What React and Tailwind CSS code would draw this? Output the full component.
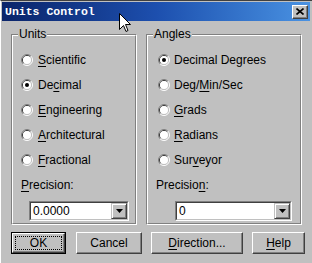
import React from 'react';

const Radio = ({ checked }) => (
    <svg width="12" height="12" viewBox="0 0 12 12" className="shrink-0">
        <path d="M2.11 9.89 A5.5 5.5 0 0 1 9.89 2.11" fill="none" stroke="#808080" strokeWidth="1" />
        <path d="M9.89 2.11 A5.5 5.5 0 0 1 2.11 9.89" fill="none" stroke="#ffffff" strokeWidth="1" />
        <path d="M2.82 9.18 A4.5 4.5 0 0 1 9.18 2.82" fill="none" stroke="#404040" strokeWidth="1" />
        <path d="M9.18 2.82 A4.5 4.5 0 0 1 2.82 9.18" fill="none" stroke="#c0c0c0" strokeWidth="1" />
        <circle cx="6" cy="6" r="4" fill="#ffffff" />
        {checked && <circle cx="6" cy="6" r="2" fill="#000000" />}
    </svg>
);

const Label = ({ text, u }) => {
    if (u == null) return <span>{text}</span>;
    return (
        <span>
            {text.slice(0, u)}
            <span className="underline underline-offset-2">{text[u]}</span>
            {text.slice(u + 1)}
        </span>
    );
};

const Option = ({ text, u, checked, gap }) => (
    <div className={`flex items-center h-[25px] ${gap}`}>
        <Radio checked={checked} />
        <Label text={text} u={u} />
    </div>
);

const Group = ({ title, width, children }) => (
    <div className={`relative h-[191px] ${width} border border-t-[#808080] border-l-[#808080] border-r-white border-b-white`}>
        <div className="h-full border border-t-white border-l-white border-r-[#808080] border-b-[#808080]">
            {children}
        </div>
        <span className="absolute -top-[9px] left-[6px] px-[1px] bg-[#c0c0c0] leading-[16px]">{title}</span>
    </div>
);

const Select = ({ value, width, ml }) => (
    <div className={`h-[20px] ${width} ${ml} border border-t-[#808080] border-l-[#808080] border-r-white border-b-white`}>
        <div className="h-full flex border border-t-[#404040] border-l-[#404040] border-r-[#c0c0c0] border-b-[#c0c0c0] bg-white">
            <span className="flex-1 pl-[2px] leading-[16px]">{value}</span>
            <div className="w-[16px] h-[16px] flex items-center justify-center bg-[#c0c0c0] border border-t-[#c0c0c0] border-l-[#c0c0c0] border-r-[#404040] border-b-[#404040] shadow-[inset_1px_1px_0_#fff,inset_-1px_-1px_0_#808080]">
                <svg width="7" height="4" viewBox="0 0 7 4">
                    <path d="M0 0 H7 L3.5 4 Z" fill="#000" />
                </svg>
            </div>
        </div>
    </div>
);

const Button = ({ children, width, ml }) => (
    <div className={`h-[22px] ${width} ${ml} flex items-center justify-center border border-t-white border-l-white border-r-[#404040] border-b-[#404040] shadow-[inset_-1px_-1px_0_#808080]`}>
        {children}
    </div>
);

export default function App() {
    return (
        <div className="relative w-[312px] h-[263px] bg-[#c0c0c0] overflow-hidden text-[12px] text-black border-t border-t-[#404040] border-l border-l-white" style={{ fontFamily: '"Liberation Sans", Arial, sans-serif' }}>
            <div className="mt-[1px] ml-[1px] mr-[2px] h-[19px] flex items-center bg-gradient-to-r from-[#0a246a] via-[#1d4fae] to-[#4a92e2] pl-[3px] pr-[2px]">
                <span className="flex-1 text-white font-bold text-[11.5px] leading-none" style={{ fontFamily: '"Liberation Mono", "Courier New", monospace' }}>
                    Units Control
                </span>
                <div className="w-[16px] h-[14px] flex items-center justify-center bg-[#c0c0c0] border border-t-white border-l-white border-r-[#404040] border-b-[#404040] shadow-[inset_-1px_-1px_0_#808080]">
                    <svg width="8" height="7" viewBox="0 0 8 7">
                        <path d="M0.5 0.5 L7.5 6.5 M7.5 0.5 L0.5 6.5" stroke="#000" strokeWidth="1.6" />
                    </svg>
                </div>
            </div>

            <div className="flex mt-[13px] ml-[10px] gap-[9px]">
                <Group title="Units" width="w-[126px]">
                    <div className="pt-[11px] pl-[8px]">
                        <Option text="Scientific" u={0} gap="gap-[5px]" />
                        <Option text="Decimal" u={2} checked gap="gap-[5px]" />
                        <Option text="Engineering" u={0} gap="gap-[5px]" />
                        <Option text="Architectural" u={0} gap="gap-[5px]" />
                        <Option text="Fractional" u={0} gap="gap-[5px]" />
                    </div>
                    <div className="pl-[8px] mt-[6px] leading-[15px]">
                        <Label text="Precision:" u={0} />
                    </div>
                    <div className="mt-[8px]">
                        <Select value="0.0000" width="w-[100px]" ml="ml-[16px]" />
                    </div>
                </Group>
                <Group title="Angles" width="w-[156px]">
                    <div className="pt-[11px] pl-[10px]">
                        <Option text="Decimal Degrees" gap="gap-[4px]" checked />
                        <Option text="Deg/Min/Sec" u={4} gap="gap-[4px]" />
                        <Option text="Grads" u={0} gap="gap-[4px]" />
                        <Option text="Radians" u={0} gap="gap-[4px]" />
                        <Option text="Surveyor" u={3} gap="gap-[4px]" />
                    </div>
                    <div className="pl-[8px] mt-[6px] leading-[15px]">
                        <Label text="Precision:" u={8} />
                    </div>
                    <div className="mt-[8px]">
                        <Select value="0" width="w-[117px]" ml="ml-[27px]" />
                    </div>
                </Group>
            </div>

            <div className="flex mt-[7px] ml-[10px]">
                <div className="h-[22px] w-[55px] border border-black">
                    <div className="h-full flex items-center justify-center border border-t-white border-l-white border-r-[#404040] border-b-[#404040] shadow-[inset_-1px_-1px_0_#808080] p-[2px]">
                        <div className="w-full h-full flex items-center justify-center border border-dotted border-black leading-none">
                            OK
                        </div>
                    </div>
                </div>
                <Button width="w-[66px]" ml="ml-[10px]">Cancel</Button>
                <Button width="w-[92px]" ml="ml-[9px]"><Label text="Direction..." u={0} /></Button>
                <Button width="w-[53px]" ml="ml-[9px]"><Label text="Help" u={0} /></Button>
            </div>

            <svg className="absolute left-[118px] top-[12px]" width="12" height="20" viewBox="0 0 12 20">
                <path d="M0.5 0.5 V16.5 L4.5 12.5 L7 18.5 L9 17.5 L6.5 11.5 H11.5 Z" fill="#fff" stroke="#000" strokeWidth="1" />
            </svg>
        </div>
    );
}
